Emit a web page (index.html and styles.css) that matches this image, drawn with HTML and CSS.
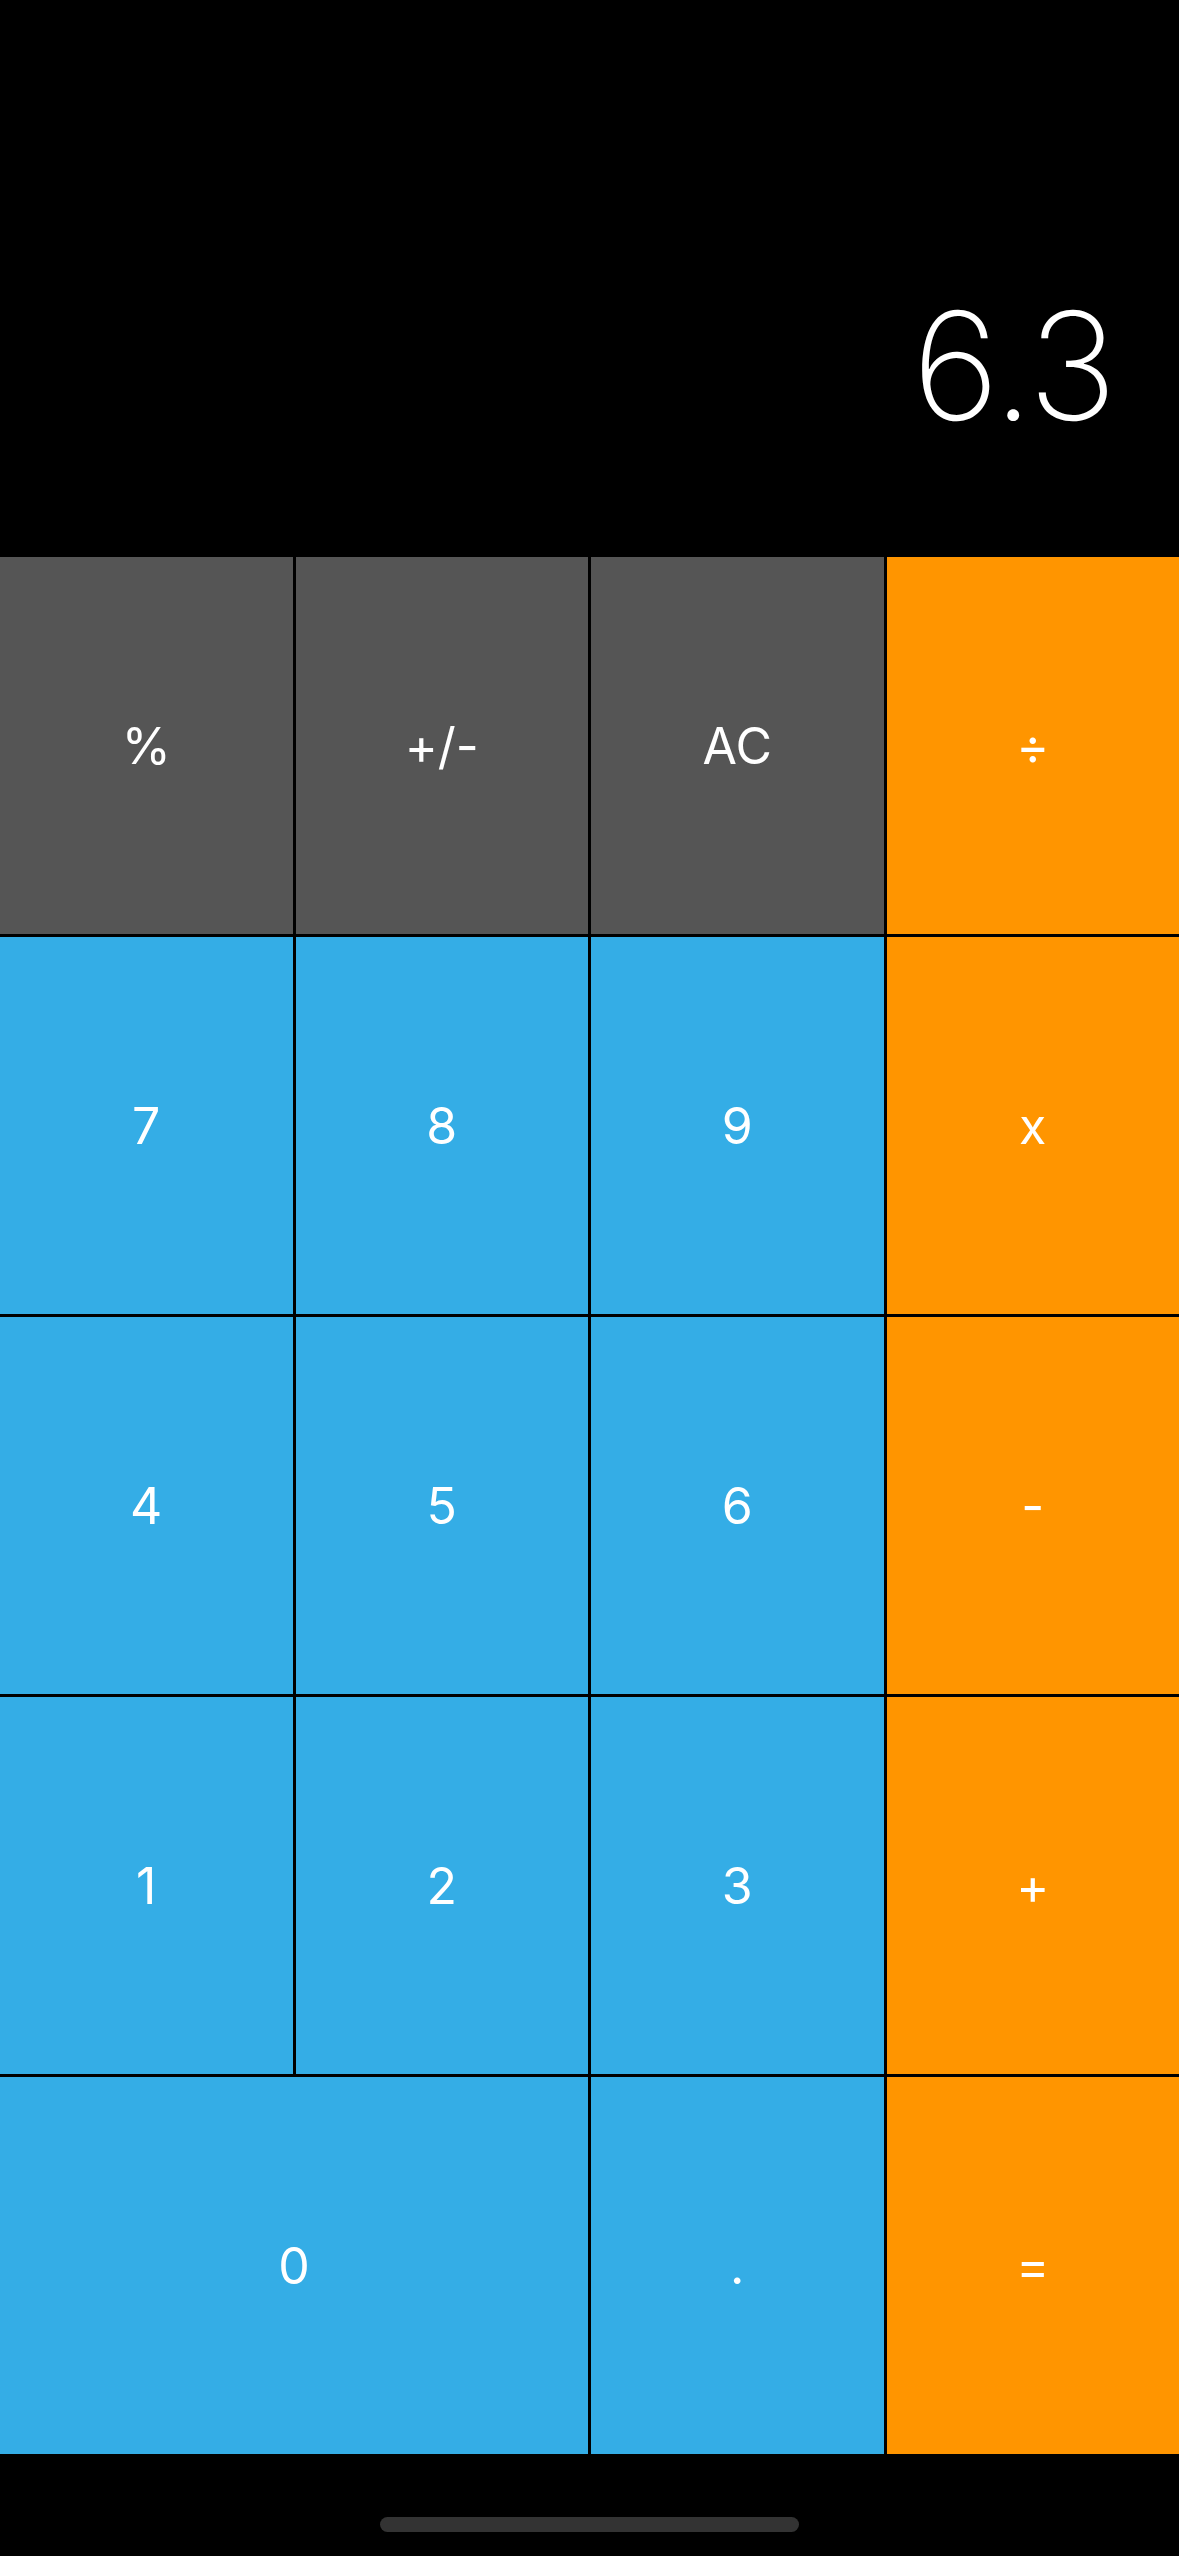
FILE: index.html
```html
<!DOCTYPE html>
<html>
<head>
<meta charset="utf-8">
<link rel="stylesheet" href="styles.css">
</head>
<body>
<div class="app">
  <div class="display"><span class="value">6.3</span></div>
  <div class="keypad">
    <div class="key fn">%</div>
    <div class="key fn">+/-</div>
    <div class="key fn">AC</div>
    <div class="key op">÷</div>
    <div class="key num">7</div>
    <div class="key num">8</div>
    <div class="key num">9</div>
    <div class="key op">x</div>
    <div class="key num">4</div>
    <div class="key num">5</div>
    <div class="key num">6</div>
    <div class="key op">-</div>
    <div class="key num">1</div>
    <div class="key num">2</div>
    <div class="key num">3</div>
    <div class="key op">+</div>
    <div class="key num zero">0</div>
    <div class="key num">.</div>
    <div class="key op">=</div>
  </div>
  <div class="footer"><div class="home-bar"></div></div>
</div>
</body>
</html>
```

FILE: styles.css
```css
html, body {
  margin: 0;
  padding: 0;
  background: #000;
}
.app {
  width: 1179px;
  height: 2556px;
  display: flex;
  flex-direction: column;
  background: #000;
  font-family: Inter, "Liberation Sans", sans-serif;
  color: #fff;
}
.display {
  height: 557px;
  box-sizing: border-box;
  display: flex;
  justify-content: flex-end;
  align-items: flex-end;
  padding: 0 64px 116px 0;
}
.value {
  font-size: 150px;
  font-weight: 200;
  line-height: 1;
  letter-spacing: -2px;
}
.keypad {
  display: grid;
  grid-template-columns: repeat(4, 1fr);
  grid-template-rows: repeat(5, 377px);
  gap: 3px;
  background: #000;
}
.key {
  display: flex;
  align-items: center;
  justify-content: center;
  font-size: 50px;
  font-weight: 400;
  color: #fff;
}
.fn { background: #555555; }
.num { background: #34ade6; }
.op { background: #ff9500; }
.zero { grid-column: span 2; }
.footer {
  flex: 1;
  display: flex;
  justify-content: center;
  padding-top: 63px;
  box-sizing: border-box;
}
.home-bar {
  width: 419px;
  height: 15px;
  border-radius: 8px;
  background: #333;
}
```
